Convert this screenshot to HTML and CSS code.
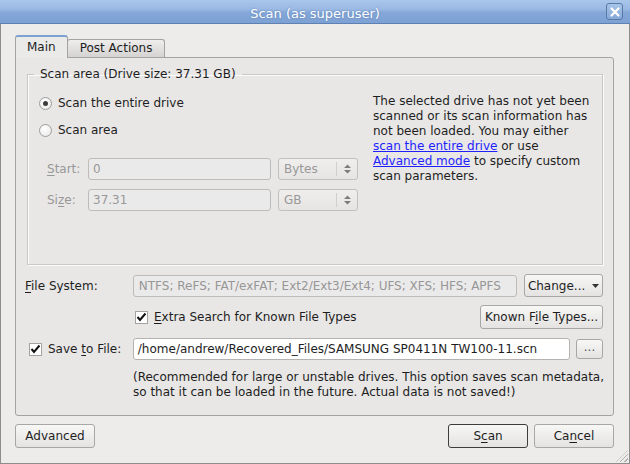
FILE: index.html
```html
<!DOCTYPE html>
<html lang="en">
<head>
    <meta charset="UTF-8">
    <title>Scan (as superuser)</title>
    <link rel="stylesheet" href="styles.css">
</head>
<body>
    <div class="window">
        <div class="titlebar">
            <span class="title">Scan (as superuser)</span>
            <span class="close-btn">
                <svg width="12" height="12" viewBox="0 0 12 12"><path d="M2.5 2.5 L9.5 9.5 M9.5 2.5 L2.5 9.5" stroke="#fff" stroke-width="2.2" stroke-linecap="round"/></svg>
            </span>
        </div>
        <div class="content">
            <div class="tabs">
                <div class="tab active">Main</div>
                <div class="tab">Post Actions</div>
            </div>
            <div class="pane">
                <fieldset class="group">
                    <legend>Scan area (Drive size: 37.31 GB)</legend>
                    <div class="group-body">
                        <div class="left-col">
                            <label class="radio-row"><span class="radio checked"></span><span>Scan the entire drive</span></label>
                            <label class="radio-row"><span class="radio"></span><span>Scan area</span></label>
                            <div class="range-row">
                                <span class="range-label disabled"><u>S</u>tart:</span>
                                <div class="field disabled">0</div>
                                <div class="combo disabled"><span>Bytes</span><span class="arrows"><svg width="9" height="12" viewBox="0 0 9 12"><path d="M1 5 L4.5 1.5 L8 5 Z M1 7 L4.5 10.5 L8 7 Z" fill="#7d7d7d"/></svg></span></div>
                            </div>
                            <div class="range-row">
                                <span class="range-label disabled">Si<u>z</u>e:</span>
                                <div class="field disabled">37.31</div>
                                <div class="combo disabled"><span>GB</span><span class="arrows"><svg width="9" height="12" viewBox="0 0 9 12"><path d="M1 5 L4.5 1.5 L8 5 Z M1 7 L4.5 10.5 L8 7 Z" fill="#7d7d7d"/></svg></span></div>
                            </div>
                        </div>
                        <div class="info">
                            The selected drive has not yet been<br>
                            scanned or its scan information has<br>
                            not been loaded. You may either<br>
                            <a href="#">scan the entire drive</a> or use<br>
                            <a href="#">Advanced mode</a> to specify custom<br>
                            scan parameters.
                        </div>
                    </div>
                </fieldset>

                <div class="form-row fs-row">
                    <span class="row-label"><u>F</u>ile System:</span>
                    <div class="field disabled wide">NTFS; ReFS; FAT/exFAT; Ext2/Ext3/Ext4; UFS; XFS; HFS; APFS</div>
                    <div class="button change-btn"><span>Change...</span><svg width="7" height="4" viewBox="0 0 7 4"><path d="M0 0 L7 0 L3.5 4 Z" fill="#333"/></svg></div>
                </div>
                <div class="form-row extra-row">
                    <label class="check-row"><span class="checkbox"><svg width="11" height="10" viewBox="0 0 11 10"><path d="M1.5 5 L4 8 L9.5 1.5" stroke="#111" stroke-width="2" fill="none"/></svg></span><span><u>E</u>xtra Search for Known File Types</span></label>
                    <div class="button known-btn"><span>Known F<u>i</u>le Types...</span></div>
                </div>
                <div class="form-row save-row">
                    <label class="check-row save-label"><span class="checkbox"><svg width="11" height="10" viewBox="0 0 11 10"><path d="M1.5 5 L4 8 L9.5 1.5" stroke="#111" stroke-width="2" fill="none"/></svg></span><span>Save <u>t</u>o File:</span></label>
                    <div class="field path">/home/andrew/Recovered_Files/SAMSUNG SP0411N TW100-11.scn</div>
                    <div class="button dots-btn">...</div>
                </div>
                <div class="note">(Recommended for large or unstable drives. This option saves scan metadata,<br>so that it can be loaded in the future. Actual data is not saved!)</div>
            </div>
            <div class="buttons">
                <div class="button dlg-btn">Advanced</div>
                <div class="spacer"></div>
                <div class="button dlg-btn default"><span>S<u>c</u>an</span></div>
                <div class="button dlg-btn"><span>Ca<u>n</u>cel</span></div>
            </div>
        </div>
        <span class="grip"></span>
    </div>
</body>
</html>
```

FILE: styles.css
```css
body {
    margin: 0;
    font-family: "DejaVu Sans", sans-serif;
    font-size: 12px;
    color: #1e1e1e;
    background: #edeceb;
}
u {
    text-decoration: underline;
    text-underline-offset: 2px;
}
.window {
    position: relative;
    width: 630px;
    height: 464px;
    box-sizing: border-box;
    border: 1px solid #8d8d8d;
    border-top: none;
    background: #edeceb;
    display: flex;
    flex-direction: column;
}
.titlebar {
    height: 23px;
    background: linear-gradient(#a9c6ea 0%, #9ab9e3 40%, #84a7d8 55%, #7da1d3 100%);
    border-bottom: 1px solid #5e80b2;
    display: flex;
    align-items: center;
    justify-content: center;
    position: relative;
    margin: 0 -1px;
}
.title {
    color: #fff;
    font-size: 13px;
    margin-top: 3px;
    text-shadow: 0 0 2px #5b7cae;
}
.close-btn {
    position: absolute;
    right: 7px;
    top: 3px;
    width: 15px;
    height: 15px;
    border: 1px solid #5a7aa8;
    border-radius: 3px;
    background: linear-gradient(#a8c4e8, #86a8d8);
    display: flex;
    align-items: center;
    justify-content: center;
}
.content {
    flex: 1;
    display: flex;
    flex-direction: column;
    padding: 12px 15px 0 14px;
}
.tabs {
    display: flex;
    align-items: flex-end;
    height: 21px;
    padding-left: 1px;
}
.tab {
    height: 18px;
    padding: 0 12px;
    line-height: 17px;
    border: 1px solid #a3a3a3;
    border-bottom: none;
    border-radius: 3px 3px 0 0;
    background: linear-gradient(#efeeed, #d4d3d2);
    box-sizing: border-box;
    margin-left: -1px;
}
.tab.active {
    padding: 0 11px;
    background: #eaeae9;
    border-top: 2px solid #7da1d3;
    position: relative;
    z-index: 1;
    margin-bottom: -1px;
    height: 23px;
    line-height: 20px;
}
.pane {
    height: 359px;
    box-sizing: border-box;
    border: 1px solid #a3a3a3;
    border-radius: 0 3px 3px 3px;
    background: #e8e7e6;
    padding: 9px 10px 0 11px;
    display: flex;
    flex-direction: column;
}
.group {
    margin: 0;
    padding: 0 10px 0 11px;
    height: 198px;
    box-sizing: border-box;
    border: 1px solid #c9c8c7;
    box-shadow: inset 1px 1px 0 #fbfbfb, 1px 1px 0 #fbfbfb;
}
.group legend {
    padding: 0 6px 0 6px;
    margin-left: -5px;
    line-height: 14px;
}
.group-body {
    display: flex;
}
.left-col {
    width: 334px;
    flex: none;
    display: flex;
    flex-direction: column;
}
.radio-row {
    display: flex;
    align-items: center;
    height: 18px;
    margin-top: 13px;
}
.radio-row + .radio-row {
    margin-top: 9px;
    margin-bottom: 19px;
}
.radio {
    width: 11px;
    height: 11px;
    border-radius: 50%;
    border: 1px solid #9e9e9e;
    background: radial-gradient(circle at 40% 35%, #ffffff, #e6e6e6);
    margin-right: 6px;
    display: inline-flex;
    align-items: center;
    justify-content: center;
    flex-shrink: 0;
}
.radio.checked::after {
    content: "";
    width: 5px;
    height: 5px;
    border-radius: 50%;
    background: #3c3c3c;
}
.range-row {
    display: flex;
    align-items: center;
    margin-bottom: 9px;
    padding-left: 8px;
}
.range-label {
    width: 41px;
}
.disabled {
    color: #999898;
}
.field {
    height: 22px;
    box-sizing: border-box;
    border: 1px solid #bdbcbb;
    border-radius: 3px;
    padding: 0 4px;
    line-height: 20px;
    background: #ebeaea;
    white-space: nowrap;
    overflow: hidden;
}
.range-row .field {
    width: 183px;
}
.combo {
    margin-left: 7px;
    width: 80px;
    height: 22px;
    box-sizing: border-box;
    border: 1px solid #c1c0bf;
    border-radius: 3px;
    background: linear-gradient(#efeeed, #e6e5e4);
    display: flex;
    align-items: center;
    justify-content: space-between;
    padding-left: 5px;
}
.arrows {
    border-left: 1px solid #d0cfce;
    height: 14px;
    width: 20px;
    display: flex;
    align-items: center;
    justify-content: center;
}
.info {
    white-space: nowrap;
    margin-top: 13px;
    line-height: 15px;
}
.info a {
    color: #1f1fff;
}
.form-row {
    display: flex;
    align-items: center;
}
.fs-row {
    margin-top: 9px;
    height: 23px;
}
.row-label {
    width: 108px;
    margin-left: -2px;
}
.field.wide {
    width: 385px;
    padding: 0 5px;
    color: #979696;
}
.button {
    box-sizing: border-box;
    height: 23px;
    border: 1px solid #a8a7a6;
    border-radius: 3px;
    background: linear-gradient(#f7f7f6, #e4e3e2);
    display: flex;
    align-items: center;
    justify-content: center;
    color: #1e1e1e;
}
.change-btn {
    margin-left: 7px;
    width: 79px;
    gap: 7px;
}
.extra-row {
    margin-top: 8px;
    height: 24px;
    justify-content: space-between;
    padding-left: 108px;
}
.check-row {
    display: flex;
    align-items: center;
}
.checkbox {
    width: 11px;
    height: 11px;
    border: 1px solid #a3a3a3;
    background: #fff;
    margin-right: 6px;
    display: inline-flex;
    align-items: center;
    justify-content: center;
    flex: none;
}
.known-btn {
    width: 123px;
    height: 24px;
}
.save-row {
    margin-top: 9px;
    height: 22px;
}
.save-label {
    width: 104px;
    margin-left: 2px;
}
.field.path {
    width: 438px;
    background: #fff;
    color: #1e1e1e;
    border-color: #b4b3b2;
}
.dots-btn {
    margin-left: 6px;
    width: 27px;
    height: 20px;
    color: #555;
    padding-bottom: 4px;
}
.note {
    margin-top: 10px;
    padding-left: 106px;
    line-height: 15px;
    white-space: nowrap;
}
.buttons {
    display: flex;
    margin-top: 8px;
    gap: 6px;
}
.spacer {
    flex: 1;
}
.dlg-btn {
    width: 80px;
    height: 24px;
}
.dlg-btn.default {
    border-color: #3d3d3d;
}
.grip {
    position: absolute;
    right: 1px;
    bottom: 1px;
    width: 12px;
    height: 12px;
    background: repeating-linear-gradient(135deg, transparent 0 2px, #b0afae 2px 3px);
    clip-path: polygon(100% 0, 100% 100%, 0 100%);
}
```
